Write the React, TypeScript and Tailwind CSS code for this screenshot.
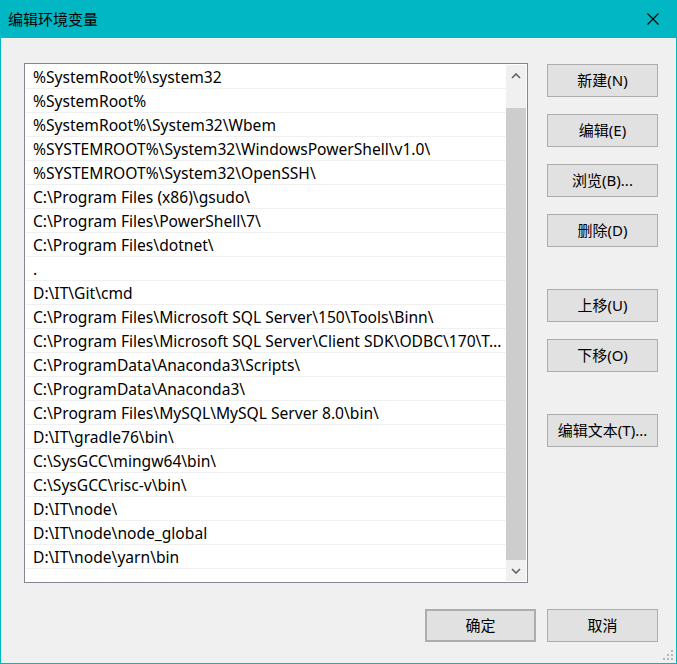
import React from "react";

const paths = [
  "%SystemRoot%\\system32",
  "%SystemRoot%",
  "%SystemRoot%\\System32\\Wbem",
  "%SYSTEMROOT%\\System32\\WindowsPowerShell\\v1.0\\",
  "%SYSTEMROOT%\\System32\\OpenSSH\\",
  "C:\\Program Files (x86)\\gsudo\\",
  "C:\\Program Files\\PowerShell\\7\\",
  "C:\\Program Files\\dotnet\\",
  ".",
  "D:\\IT\\Git\\cmd",
  "C:\\Program Files\\Microsoft SQL Server\\150\\Tools\\Binn\\",
  "C:\\Program Files\\Microsoft SQL Server\\Client SDK\\ODBC\\170\\Tools\\Binn\\",
  "C:\\ProgramData\\Anaconda3\\Scripts\\",
  "C:\\ProgramData\\Anaconda3\\",
  "C:\\Program Files\\MySQL\\MySQL Server 8.0\\bin\\",
  "D:\\IT\\gradle76\\bin\\",
  "C:\\SysGCC\\mingw64\\bin\\",
  "C:\\SysGCC\\risc-v\\bin\\",
  "D:\\IT\\node\\",
  "D:\\IT\\node\\node_global",
  "D:\\IT\\node\\yarn\\bin",
];

const font = "font-['Noto_Sans','Noto_Sans_CJK_SC',sans-serif]";

function Btn({ label, className = "" }: { label: string; className?: string }) {
  return (
    <button
      className={`w-[111px] h-[33px] bg-[#e1e1e1] border border-[#adadad] text-[15px] text-black flex items-center justify-center ${className}`}
    >
      {label}
    </button>
  );
}

export default function App() {
  return (
    <div className={`w-[677px] h-[664px] flex flex-col bg-[#f0f0f0] border-x border-b border-[#00b7c3] relative ${font}`}>
      {/* title bar */}
      <div className="h-[38px] bg-[#00b7c3] flex items-center justify-between pl-[7px] pr-[17px] shrink-0">
        <span className="text-[15px] text-black">编辑环境变量</span>
        <svg width="12" height="12" viewBox="0 0 12 12">
          <path d="M0.5 0.5 L11.5 11.5 M11.5 0.5 L0.5 11.5" stroke="#000" strokeWidth="1.1" />
        </svg>
      </div>

      <div className="flex pl-[23px] pt-[25px] gap-[19px]">
        {/* list box */}
        <div className="w-[504px] h-[520px] border border-[#828790] bg-white p-px flex">
          <div className="flex-1 min-w-0 overflow-hidden">
            {paths.map((p) => (
              <div
                key={p}
                className="h-[24px] border-b border-[#f0f0f0] pl-[7px] pr-[3px] flex items-center text-[15.6px] text-black"
              >
                <span className="truncate leading-[22px]">{p}</span>
              </div>
            ))}
          </div>
          {/* scrollbar */}
          <div className="w-[20px] bg-[#f0f0f0] flex flex-col shrink-0">
            <div className="h-[22px] flex items-center justify-center">
              <svg width="10" height="6" viewBox="0 0 10 6">
                <path d="M1 5 L5 1 L9 5" stroke="#606060" strokeWidth="1.6" fill="none" />
              </svg>
            </div>
            <div className="h-[21px]" />
            <div className="h-[452px] bg-[#cdcdcd]" />
            <div className="flex-1 flex items-center justify-center">
              <svg width="10" height="6" viewBox="0 0 10 6">
                <path d="M1 1 L5 5 L9 1" stroke="#606060" strokeWidth="1.6" fill="none" />
              </svg>
            </div>
          </div>
        </div>

        {/* side buttons */}
        <div className="flex flex-col pt-px">
          <Btn label="新建(N)" />
          <Btn label="编辑(E)" className="mt-[17px]" />
          <Btn label="浏览(B)..." className="mt-[17px]" />
          <Btn label="删除(D)" className="mt-[17px]" />
          <Btn label="上移(U)" className="mt-[42px]" />
          <Btn label="下移(O)" className="mt-[17px]" />
          <Btn label="编辑文本(T)..." className="mt-[42px]" />
        </div>
      </div>

      {/* bottom buttons */}
      <div className="flex justify-end gap-[11px] pr-[18px] mt-[26px]">
        <Btn label="确定" className="border-2 border-[#0078d7]" />
        <Btn label="取消" />
      </div>

      {/* resize grip */}
      <svg className="absolute right-[2px] bottom-[2px]" width="11" height="11" viewBox="0 0 11 11">
        <rect x="8" y="0" width="2" height="2" fill="#b8b8b8" />
        <rect x="4" y="4" width="2" height="2" fill="#b8b8b8" />
        <rect x="8" y="4" width="2" height="2" fill="#b8b8b8" />
        <rect x="0" y="8" width="2" height="2" fill="#b8b8b8" />
        <rect x="4" y="8" width="2" height="2" fill="#b8b8b8" />
        <rect x="8" y="8" width="2" height="2" fill="#b8b8b8" />
      </svg>
    </div>
  );
}
